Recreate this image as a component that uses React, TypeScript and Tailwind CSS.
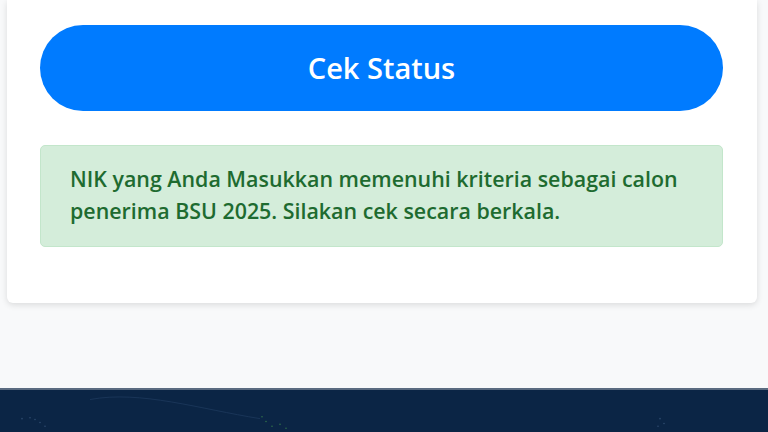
import React from 'react';

export default function App() {
  return (
    <div className="min-h-[432px] bg-[#f8f9fa] font-['Open_Sans',sans-serif] overflow-hidden">
      <div className="pl-[7px] pr-[11px]">
        <div className="bg-white rounded-b-md shadow-[0_2px_6px_rgba(0,0,0,0.12)] pl-[33px] pr-[34px] pt-[25px] pb-[56px]">
          <button className="w-full h-[86px] rounded-full bg-[#007bff] text-white text-[29px] font-semibold">
            Cek Status
          </button>
          <div className="mt-[34px] h-[102px] rounded-[5px] border border-[#c3e6cb] bg-[#d4edda] px-[29px] pt-[17px] text-[21.4px] leading-[32px] font-semibold text-[#1e6b30]">
            NIK yang Anda Masukkan memenuhi kriteria sebagai calon penerima BSU 2025. Silakan cek secara berkala.
          </div>
        </div>
      </div>
      <footer className="mt-[85px] h-[44px] bg-[#0b2545] border-t-2 border-[#5a6b80] relative">
        <svg className="absolute inset-0 w-full h-full" viewBox="0 0 768 44" preserveAspectRatio="none">
          <path d="M90 10 C140 0 200 20 260 30" stroke="#1a3558" strokeWidth="1" fill="none" />
          <g fill="#2d4a6e">
            <circle cx="22" cy="30" r="0.8" />
            <circle cx="30" cy="29" r="0.8" />
            <circle cx="35" cy="31" r="0.8" />
            <circle cx="40" cy="34" r="0.8" />
            <circle cx="45" cy="38" r="0.8" />
            <circle cx="660" cy="30" r="0.8" />
            <circle cx="664" cy="35" r="0.8" />
            <circle cx="658" cy="38" r="0.8" />
          </g>
          <g fill="#2f6e4a">
            <circle cx="262" cy="28" r="0.8" />
            <circle cx="266" cy="33" r="0.8" />
            <circle cx="272" cy="38" r="0.8" />
            <circle cx="280" cy="36" r="0.8" />
            <circle cx="286" cy="40" r="0.8" />
          </g>
        </svg>
      </footer>
    </div>
  );
}
